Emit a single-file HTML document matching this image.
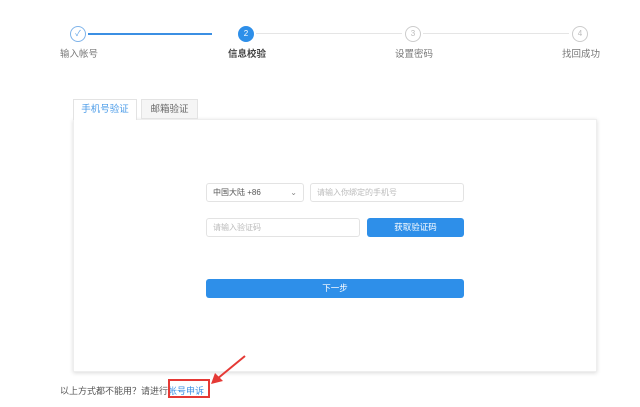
<!DOCTYPE html><html><head><meta charset="utf-8"><style>
*{margin:0;padding:0;box-sizing:border-box}
body{width:640px;height:407px;background:#fff;position:relative;font-family:"Liberation Sans","Noto Sans CJK SC",sans-serif;font-size:9px;color:#666;overflow:hidden}
.a{position:absolute}
.c{width:16px;height:16px;border-radius:50%;border:1px solid #ccc;color:#bbb;font-size:8px;text-align:center;line-height:14px;background:#fff}
.l{font-size:9.5px;color:#777;white-space:nowrap}
.in{border:1px solid #e3e3e3;border-radius:3px;background:#fff;color:#bbb;font-size:8px;padding-left:6px;line-height:17px}
.bt{background:#2e8fe9;border-radius:3px;color:#fff;font-size:8.5px;text-align:center}
</style></head><body>
<div class="a" style="left:88px;top:33px;width:124px;height:2px;background:#3b8fe3"></div>
<div class="a" style="left:256px;top:33px;width:146px;height:1px;background:#e5e5e5"></div>
<div class="a" style="left:423px;top:33px;width:146px;height:1px;background:#e5e5e5"></div>
<div class="a c" style="left:70px;top:26px;border-color:#7fb4ea;color:#5aa0e6">✓</div>
<div class="a c" style="left:238px;top:26px;background:#2e8fe9;border-color:#2e8fe9;color:#fff">2</div>
<div class="a c" style="left:405px;top:26px">3</div>
<div class="a c" style="left:572px;top:26px">4</div>
<div class="a l" style="left:60px;top:46px">输入帐号</div>
<div class="a l" style="left:228px;top:46px;color:#444;font-weight:bold">信息校验</div>
<div class="a l" style="left:395px;top:46px">设置密码</div>
<div class="a l" style="left:562px;top:46px">找回成功</div>
<div class="a" style="left:73px;top:119px;width:524px;height:253px;background:#fff;border:1px solid #eee;box-shadow:0 1px 4px rgba(0,0,0,.15)"></div>
<div class="a" style="left:73px;top:99px;width:64px;height:21px;border:1px solid #e3e3e3;border-bottom:none;background:#fff;color:#4a9be8;font-size:9.5px;text-align:center;line-height:20px">手机号验证</div>
<div class="a" style="left:141px;top:99px;width:57px;height:20px;border:1px solid #e3e3e3;background:#f5f5f5;color:#666;font-size:9.5px;text-align:center;line-height:20px">邮箱验证</div>
<div class="a in" style="left:206px;top:183px;width:98px;height:19px;color:#555">中国大陆 +86<span style="position:absolute;right:6px;top:0;color:#888">⌄</span></div>
<div class="a in" style="left:310px;top:183px;width:154px;height:19px">请输入你绑定的手机号</div>
<div class="a in" style="left:206px;top:218px;width:154px;height:19px">请输入验证码</div>
<div class="a bt" style="left:367px;top:218px;width:97px;height:19px;line-height:19px">获取验证码</div>
<div class="a bt" style="left:206px;top:279px;width:258px;height:19px;line-height:19px">下一步</div>
<div class="a" style="left:60px;top:384px;font-size:9px;color:#555;white-space:nowrap">以上方式都不能用？请进行<span style="color:#3b8fe3">帐号申诉</span></div>
<div class="a" style="left:168px;top:379px;width:42px;height:19px;border:2px solid #e53935"></div>
<svg class="a" style="left:205px;top:352px" width="45" height="35"><line x1="40" y1="4" x2="12" y2="27" stroke="#e53935" stroke-width="2"/><polygon points="6,32 10,21 18,29" fill="#e53935"/></svg>
</body></html>
